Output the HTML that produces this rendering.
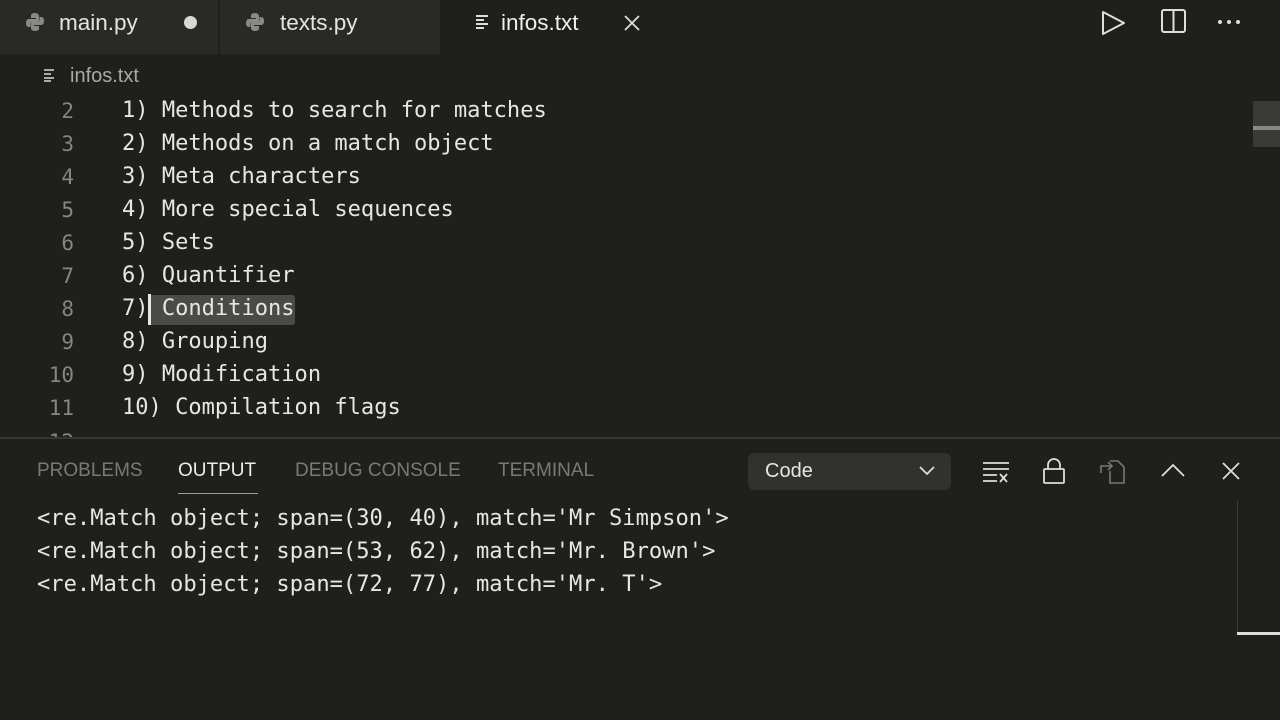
<!DOCTYPE html>
<html><head><meta charset="utf-8"><style>
*{margin:0;padding:0;box-sizing:border-box}
body{width:1280px;height:720px;background:#1f1f1c;overflow:hidden;position:relative;font-family:"Liberation Sans",sans-serif;color:#e4e4e0}
.abs{position:absolute}
.tab{position:absolute;top:0;height:54px;font-size:22.5px;line-height:46px}
.mono{font-family:"DejaVu Sans Mono","Liberation Mono",monospace}
.ln{position:absolute;left:0;width:74px;text-align:right;color:#86867f;font-size:21px}
.code{position:absolute;left:122px;font-size:22.05px;color:#e6e6e2;white-space:pre}
.ptab{position:absolute;top:460px;font-size:19px;color:#7a7a75}
.out{position:absolute;left:37px;font-size:22.1px;color:#e6e6e2;white-space:pre}
</style></head><body>
<div class="abs" style="left:0;top:0;width:1280px;height:54px;background:#1f1f1c"></div>
<div class="tab" style="left:0;width:218px;background:#292926">
 <svg class="abs" style="left:25px;top:12px" width="20" height="20" viewBox="0 0 20 20"><path d="M10 1c-4 0-4 2-4 3v2h5v1H4C2 7 1 8.5 1 11s1 4 3 4h1.5v-2.5C5.5 11 6.5 10 8 10h4c1.5 0 2-1 2-2V4c0-1.500-1.5-3-4-3z M10 19c4 0 4-2 4-3v-2H9v-1h7c2 0 3-1.5 3-4s-1-4-3-4h-1.5v2.5c0 1.5-1 2.5-2.5 2.5H8c-1.5 0-2 1-2 2v4c0 1.5 1.5 3 4 3z" fill="#8a8a85"/></svg>
 <span class="abs" style="left:59px;top:0">main.py</span>
 <span class="abs" style="left:184px;top:16px;width:13px;height:13px;border-radius:50%;background:#d8d8d4"></span>
</div>
<div class="tab" style="left:220px;width:220px;background:#292926">
 <svg class="abs" style="left:25px;top:12px" width="20" height="20" viewBox="0 0 20 20"><path d="M10 1c-4 0-4 2-4 3v2h5v1H4C2 7 1 8.5 1 11s1 4 3 4h1.5v-2.5C5.5 11 6.5 10 8 10h4c1.5 0 2-1 2-2V4c0-1.500-1.5-3-4-3z M10 19c4 0 4-2 4-3v-2H9v-1h7c2 0 3-1.5 3-4s-1-4-3-4h-1.5v2.5c0 1.5-1 2.5-2.5 2.5H8c-1.5 0-2 1-2 2v4c0 1.5 1.5 3 4 3z" fill="#8a8a85"/></svg>
 <span class="abs" style="left:60px;top:0">texts.py</span>
</div>
<div class="tab" style="left:440px;width:220px">
 <svg class="abs" style="left:36px;top:15px" width="13" height="14"><rect x="0" y="0" width="12" height="2" fill="#ddd"/><rect x="0" y="4" width="8" height="2" fill="#ddd"/><rect x="0" y="8" width="12" height="2" fill="#ddd"/><rect x="0" y="12" width="8" height="2" fill="#ddd"/></svg>
 <span class="abs" style="left:61px;top:0;color:#f0f0ec">infos.txt</span>
 <svg class="abs" style="left:184px;top:15px" width="16" height="16"><path d="M1 1L15 15M15 1L1 15" stroke="#ddd" stroke-width="1.8"/></svg>
</div>
<svg class="abs" style="left:1100px;top:10px" width="28" height="26"><path d="M3 2L24 13L3 24Z" fill="none" stroke="#ddd" stroke-width="2" stroke-linejoin="round"/></svg>
<svg class="abs" style="left:1160px;top:9px" width="28" height="26"><rect x="2" y="1" width="23" height="22" rx="2" fill="none" stroke="#ddd" stroke-width="2"/><path d="M13.5 1v22" stroke="#ddd" stroke-width="2"/></svg>
<div class="abs" style="left:1218px;top:20px;width:30px;height:5px">
 <span class="abs" style="left:0;top:0;width:4px;height:4px;border-radius:50%;background:#ddd"></span>
 <span class="abs" style="left:9px;top:0;width:4px;height:4px;border-radius:50%;background:#ddd"></span>
 <span class="abs" style="left:18px;top:0;width:4px;height:4px;border-radius:50%;background:#ddd"></span>
</div>
<svg class="abs" style="left:44px;top:69px" width="11" height="13"><rect x="0" y="0" width="10" height="2" fill="#aaa"/><rect x="0" y="4" width="7" height="2" fill="#aaa"/><rect x="0" y="8" width="10" height="2" fill="#aaa"/><rect x="0" y="11" width="7" height="2" fill="#aaa"/></svg>
<div class="abs" style="left:70px;top:65px;font-size:20px;color:#a9a9a4">infos.txt</div>
<div class="mono">
<div class="ln" style="top:99px">2</div><div class="code" style="top:98px">1) Methods to search for matches</div>
<div class="ln" style="top:132px">3</div><div class="code" style="top:131px">2) Methods on a match object</div>
<div class="ln" style="top:165px">4</div><div class="code" style="top:164px">3) Meta characters</div>
<div class="ln" style="top:198px">5</div><div class="code" style="top:197px">4) More special sequences</div>
<div class="ln" style="top:231px">6</div><div class="code" style="top:230px">5) Sets</div>
<div class="ln" style="top:264px">7</div><div class="code" style="top:263px">6) Quantifier</div>
<div class="abs" style="left:148px;top:295px;width:147px;height:30px;background:#4a4a46;border-radius:3px"></div>
<div class="abs" style="left:148px;top:294px;width:3px;height:31px;background:#e6e6e2"></div>
<div class="ln" style="top:297px">8</div><div class="code" style="top:296px">7) Conditions</div>
<div class="ln" style="top:330px">9</div><div class="code" style="top:329px">8) Grouping</div>
<div class="ln" style="top:363px">10</div><div class="code" style="top:362px">9) Modification</div>
<div class="ln" style="top:396px">11</div><div class="code" style="top:395px">10) Compilation flags</div>
</div>
<div class="abs" style="left:0;top:427px;width:1280px;height:11px;overflow:hidden"><div class="ln mono" style="top:3px">12</div></div>
<div class="abs" style="left:1253px;top:101px;width:27px;height:46px;background:#3a3a36"></div>
<div class="abs" style="left:1253px;top:126px;width:27px;height:4px;background:#8a8a85"></div>
<div class="abs" style="left:0;top:437px;width:1280px;height:283px;background:#1f1f1c;border-top:2px solid #353531"></div>
<div class="ptab" style="left:37px">PROBLEMS</div>
<div class="ptab" style="left:178px;color:#ececE8">OUTPUT</div>
<div class="abs" style="left:178px;top:493px;width:80px;height:1px;background:#9a9a95"></div>
<div class="ptab" style="left:295px">DEBUG CONSOLE</div>
<div class="ptab" style="left:498px">TERMINAL</div>
<div class="abs" style="left:748px;top:453px;width:203px;height:37px;background:#31312e;border-radius:6px"></div>
<div class="abs" style="left:765px;top:460px;font-size:20px;color:#e6e6e2">Code</div>
<svg class="abs" style="left:918px;top:465px" width="18" height="12"><path d="M2 2L9 9L16 2" fill="none" stroke="#ddd" stroke-width="1.8"/></svg>
<svg class="abs" style="left:982px;top:460px" width="28" height="24"><path d="M1 3h26M1 9h26M1 15h14M1 21h14" stroke="#ddd" stroke-width="1.8"/><path d="M18 14l7 8M25 14l-7 8" stroke="#ddd" stroke-width="1.8"/></svg>
<svg class="abs" style="left:1042px;top:457px" width="24" height="28"><rect x="2" y="12" width="20" height="14" rx="1" fill="none" stroke="#ddd" stroke-width="1.8"/><path d="M6 12V8a6 6 0 0 1 12 0v4" fill="none" stroke="#ddd" stroke-width="1.8"/></svg>
<svg class="abs" style="left:1098px;top:457px" width="30" height="28"><path d="M12 4h8l6 6v16H12V14" fill="none" stroke="#777" stroke-width="1.6"/><path d="M3 16V9h10M10 5l4 4-4 4" fill="none" stroke="#777" stroke-width="1.6"/></svg>
<svg class="abs" style="left:1160px;top:462px" width="26" height="16"><path d="M2 14L13 3L24 14" fill="none" stroke="#ddd" stroke-width="1.8"/></svg>
<svg class="abs" style="left:1222px;top:462px" width="18" height="18"><path d="M1 1L17 17M17 1L1 17" stroke="#ddd" stroke-width="1.8"/></svg>
<div class="mono">
<div class="out" style="top:505px">&lt;re.Match object; span=(30, 40), match='Mr Simpson'&gt;</div>
<div class="out" style="top:538px">&lt;re.Match object; span=(53, 62), match='Mr. Brown'&gt;</div>
<div class="out" style="top:571px">&lt;re.Match object; span=(72, 77), match='Mr. T'&gt;</div>
</div>
<div class="abs" style="left:1237px;top:500px;width:1px;height:132px;background:#3a3a36"></div>
<div class="abs" style="left:1237px;top:632px;width:43px;height:3px;background:#ddd"></div>
</body></html>
